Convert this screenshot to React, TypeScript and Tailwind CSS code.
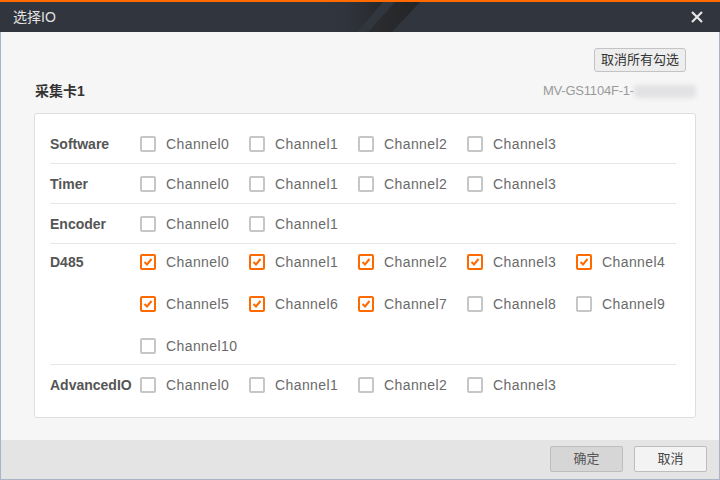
import React from 'react'

const font = { fontFamily: '"Liberation Sans", "Noto Sans CJK SC", sans-serif' }

interface RowProps {
  label: string
  channels: number
  checked?: number[]
  last?: boolean
}

const Check: React.FC<{ on: boolean; label: string }> = ({ on, label }) => (
  <div className="flex items-center gap-[10px] w-[109px] h-[24px] shrink-0">
    <div
      className={`w-[16px] h-[16px] rounded-[2px] border-2 flex items-center justify-center ${
        on ? 'border-[#ff6a00]' : 'border-[#c6c6c6]'
      } bg-white`}
    >
      {on && (
        <svg width="10" height="10" viewBox="0 0 10 10">
          <path d="M1.5 5 L4 7.5 L8.5 2" stroke="#ff6a00" strokeWidth="2" fill="none" />
        </svg>
      )}
    </div>
    <span className="text-[14px] text-[#6a6a6a] tracking-[0.4px] pt-[1px]">{label}</span>
  </div>
)

const IoRow: React.FC<RowProps> = ({ label, channels, checked = [], last }) => {
  const items = Array.from({ length: channels }, (_, i) => i)
  const multi = channels > 5
  return (
    <div
      className={`flex ${multi ? 'py-[6px]' : 'h-[40px] items-center'} ${
        last ? '' : 'border-b border-[#e6e6e6]'
      }`}
    >
      <div className="w-[90px] shrink-0 h-[24px] pt-[1px] flex items-center text-[14px] font-bold text-[#555]">
        {label}
      </div>
      <div className="grid grid-cols-[repeat(5,109px)] gap-y-[18px]">
        {items.map((i) => (
          <Check key={i} on={checked.includes(i)} label={`Channel${i}`} />
        ))}
      </div>
    </div>
  )
}

export default function App() {
  return (
    <div className="w-[720px] h-[480px] flex flex-col" style={font}>
      <div className="relative h-[32px] bg-[#31353e] border-t-2 border-[#ff6a00] overflow-hidden">
        <svg className="absolute left-0 top-0" width="720" height="30">
          <defs>
            <linearGradient id="g1" x1="0" x2="1" y1="0" y2="0">
              <stop offset="0" stopColor="#31353e" stopOpacity="0" />
              <stop offset="1" stopColor="#252628" />
            </linearGradient>
            <linearGradient id="g2" x1="0" x2="1" y1="0" y2="0">
              <stop offset="0" stopColor="#2c2d30" />
              <stop offset="1" stopColor="#232426" />
            </linearGradient>
          </defs>
          <polygon points="325,0 383,0 357,30 325,30" fill="url(#g1)" />
          <polygon points="395,0 420,0 392,30 368,30" fill="url(#g2)" />
        </svg>
        <div className="relative h-full flex items-center justify-between pl-[13px] pr-[16px]">
          <span className="text-[14px] text-[#e2e2e2]">选择IO</span>
          <svg width="14" height="14" viewBox="0 0 14 14">
            <path d="M2 2 L12 12 M12 2 L2 12" stroke="#e6e6e6" strokeWidth="2.2" />
          </svg>
        </div>
      </div>

      <div className="flex-1 bg-[#f6f6f6] border-x border-[#a9b4c6] pl-[33px] pr-[23px] pt-[16px]">
        <div className="flex justify-end pr-[10px]">
          <button className="h-[24px] w-[92px] bg-[#eeeeee] border border-[#c3c3c3] rounded-[3px] text-[13px] text-[#333]">
            取消所有勾选
          </button>
        </div>
        <div className="mt-[9px] h-[20px] mb-[12px] flex items-center justify-between">
          <span className="text-[14px] font-bold text-[#333] pl-[1px]">采集卡1</span>
          <div className="flex items-center">
            <span className="text-[13px] text-[#9a9a9a] tracking-[-0.2px]">MV-GS1104F-1-</span>
            <div className="w-[62px] h-[13px] bg-[#e2e2e4] blur-[2px] rounded" />
          </div>
        </div>
        <div className="bg-white border border-[#dedede] rounded-[3px] pl-[15px] pr-[19px] pt-[10px] pb-[12px]">
          <IoRow label="Software" channels={4} />
          <IoRow label="Timer" channels={4} />
          <IoRow label="Encoder" channels={2} />
          <IoRow label="D485" channels={11} checked={[0, 1, 2, 3, 4, 5, 6, 7]} />
          <IoRow label="AdvancedIO" channels={4} last />
        </div>
      </div>

      <div className="h-[40px] bg-[#e4e4e4] border-x border-b border-[#a9b4c6] flex items-start justify-end gap-[11px] pt-[6px] pr-[12px]">
        <button className="w-[73px] h-[26px] bg-[#d6d6d6] border border-[#bdbdbd] rounded-[2px] text-[13px] text-[#555]">
          确定
        </button>
        <button className="w-[73px] h-[26px] bg-[#f3f3f3] border border-[#bdbdbd] rounded-[2px] text-[13px] text-[#444]">
          取消
        </button>
      </div>
    </div>
  )
}
